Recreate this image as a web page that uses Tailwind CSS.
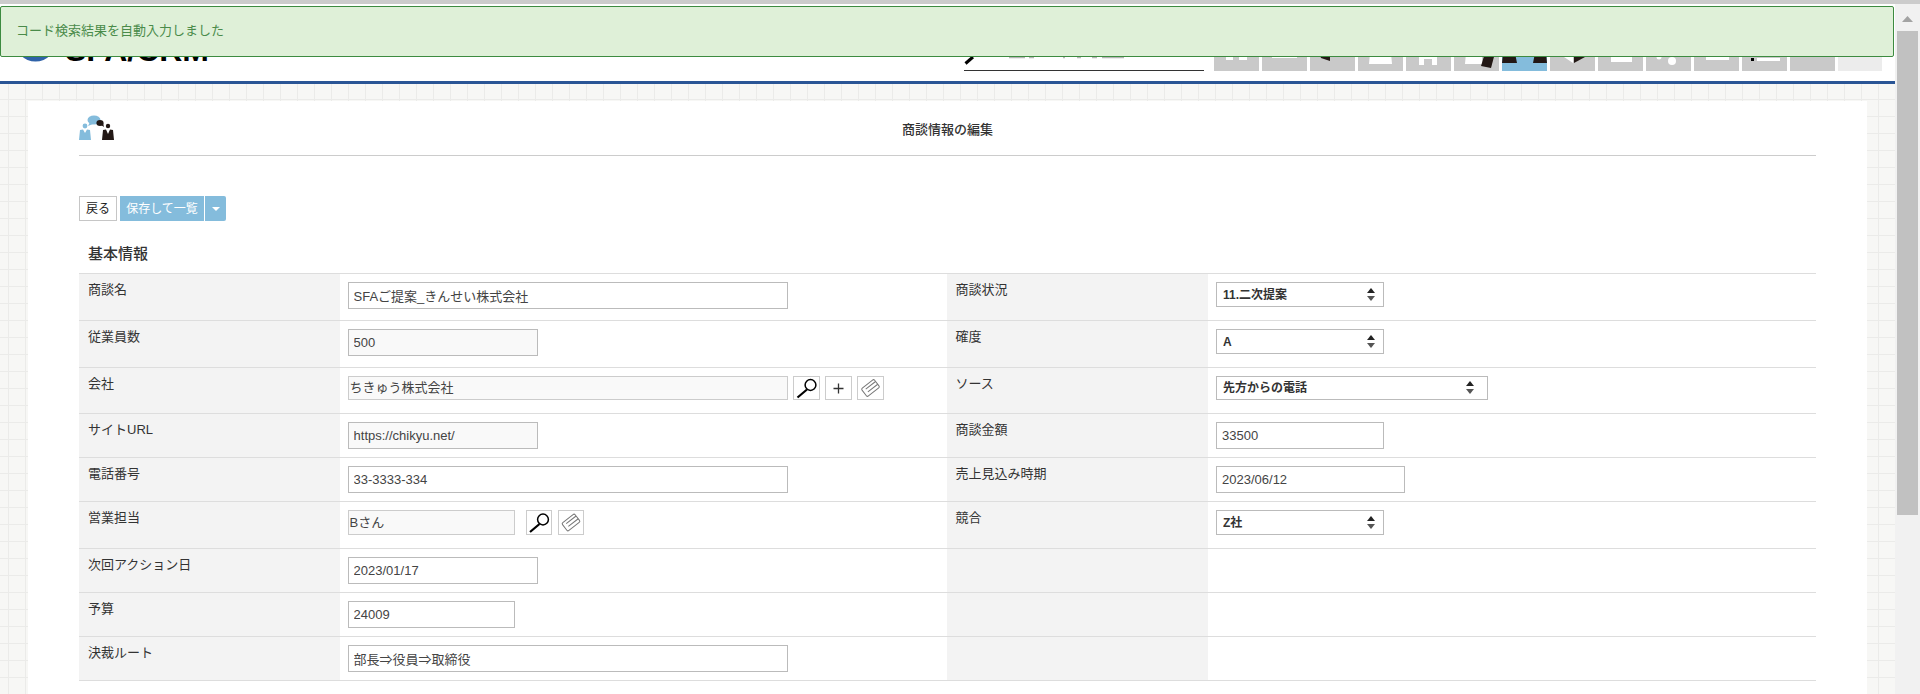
<!DOCTYPE html>
<html lang="ja">
<head>
    <meta charset="UTF-8">
    <meta name="viewport" content="width=device-width, initial-scale=1.0">
    <title>商談情報の編集</title>
    <script src="https://cdn.jsdelivr.net/npm/@tailwindcss/browser@4"></script>
</head>
<body class="h-[694px] overflow-hidden bg-white text-[13px] text-[#333] font-['Liberation_Sans','Noto_Sans_CJK_JP',sans-serif]">
    <div class="h-[4px] bg-[#cccccc]"></div>

    <!-- Notification -->
    <div class="absolute left-0 top-[6px] z-10 flex h-[51px] w-[1894px] items-center rounded-[2px] border border-[#3d8b40] bg-[#dff0d8] pb-[2px] pl-[15px] text-[#4a8b4a]">コード検索結果を自動入力しました</div>

    <div class="flex h-[690px]">
        <div class="flex w-[1895px] flex-col">
            <!-- Header -->
            <header class="flex h-[80px] shrink-0 items-end border-b-[3px] border-[#2a5595] pb-[10px] pr-[13px]">
                <div class="flex items-start self-start">
                    <svg class="ml-[14px] mt-[15px] h-[43px] w-[43px]" viewBox="0 0 43 43"><circle cx="21.5" cy="21.5" r="21" fill="#2f62a8"/></svg>
                    <span class="ml-[8px] mt-[30px] text-[32px] font-bold leading-none text-black">SFA/CRM</span>
                </div>

                <div class="ml-auto h-[46px] w-[240px] border-b-[1.5px] border-[#333]">
                    <svg class="h-[44px] w-[240px]" viewBox="0 0 240 44">
                        <path d="M9 32 L1.5 38.5" stroke="#000" stroke-width="3"/>
                        <path d="M45 32.5 H61 M65 32.5 H70 M99 32.5 H101 M113 32.5 H117 M128 32.5 H133 M138 32.5 H160" stroke="#b5b5b5" stroke-width="1.5"/>
                    </svg>
                </div>

                <!-- Menu tiles, their tops are under the notification -->
                <nav class="ml-[10px] flex gap-[3px]">
                    <svg class="h-[46px] w-[45px] bg-[#c9c9c9]" viewBox="0 0 45 46"><path d="M12 28 H19 V35 H12 Z M25 28 H33 V35 H25 Z" fill="#fff"/></svg>
                    <svg class="h-[46px] w-[45px] bg-[#c9c9c9]" viewBox="0 0 45 46"><path d="M10 28 H35 V33 H10 Z" fill="#fff"/></svg>
                    <svg class="h-[46px] w-[45px] bg-[#c9c9c9]" viewBox="0 0 45 46"><path d="M9 28 H20 V36 L11 33 Z" fill="#231815"/></svg>
                    <svg class="h-[46px] w-[45px] bg-[#c9c9c9]" viewBox="0 0 45 46"><path d="M12 28 H33 L34 39 H11 Z" fill="#fff"/></svg>
                    <svg class="h-[46px] w-[45px] bg-[#c9c9c9]" viewBox="0 0 45 46"><path d="M13 28 H31 V40 H26 V34 H18 V40 H13 Z" fill="#fff"/></svg>
                    <svg class="h-[46px] w-[45px] bg-[#c9c9c9]" viewBox="0 0 45 46"><path d="M12 28 H28 V39 H11 Z" fill="#fff"/><path d="M31 28 H41 L37 43 L27 41 Z" fill="#231815"/></svg>
                    <svg class="h-[46px] w-[45px] bg-[#84bcdc]" viewBox="0 0 45 46"><path d="M1 28 H13 L15 38 H0 Z M33 28 H44 L45 38 H31 Z" fill="#231815"/></svg>
                    <svg class="h-[46px] w-[45px] bg-[#c9c9c9]" viewBox="0 0 45 46"><path d="M11 30 H23 V38 Z" fill="#fff"/><path d="M24 32 H35 L24 38 Z" fill="#231815"/></svg>
                    <svg class="h-[46px] w-[45px] bg-[#c9c9c9]" viewBox="0 0 45 46"><path d="M13 28 H34 V37 H13 Z" fill="#fff"/></svg>
                    <svg class="h-[46px] w-[45px] bg-[#c9c9c9]" viewBox="0 0 45 46"><circle cx="13" cy="32" r="2.5" fill="#fff"/><circle cx="26" cy="36" r="4" fill="#fff"/></svg>
                    <svg class="h-[46px] w-[45px] bg-[#c9c9c9]" viewBox="0 0 45 46"><path d="M12 28 H35 V35 H12 Z" fill="#fff"/></svg>
                    <svg class="h-[46px] w-[45px] bg-[#c9c9c9]" viewBox="0 0 45 46"><path d="M9 33 H12 V36 H9 Z" fill="#000"/><path d="M15 33 H38 V36 H15 Z" fill="#fff"/></svg>
                    <div class="h-[46px] w-[45px] bg-[#c9c9c9]"></div>
                    <div class="h-[46px] w-[44px] bg-[#ececec]"></div>
                </nav>
            </header>

            <!-- Page -->
            <main class="flex-1 bg-[#f7f7f5] bg-[linear-gradient(#ebebe9_1px,transparent_1px),linear-gradient(90deg,#ebebe9_1px,transparent_1px)] bg-size-[17px_17px] bg-position-[8px_15px] px-[28px] pt-[17px]">
                <div class="h-full bg-white px-[51px] pt-[14px]">
                    <div class="flex h-[41px] border-b border-[#cccccc]">
                        <svg class="h-[25px] w-[35px]" viewBox="0 0 35 25">
                            <ellipse cx="15" cy="5" rx="6.5" ry="4.5" fill="#84bcdc"/>
                            <path d="M11 7 L9 11 L14 9 Z" fill="#84bcdc"/>
                            <circle cx="6" cy="11" r="2.4" fill="#84bcdc"/>
                            <path d="M0 25 L1 15 L4 14.5 L6 18 L8 14.5 L11 15 L12 25 Z" fill="#84bcdc"/>
                            <ellipse cx="21" cy="8" rx="3.6" ry="3" fill="#231815"/>
                            <path d="M22 10 L25 12 L24 8 Z" fill="#231815"/>
                            <circle cx="29" cy="11" r="2.2" fill="#231815"/>
                            <path d="M23 25 L24 15 L27 14.5 L29 19 L31 14.5 L34 15 L35 25 Z" fill="#231815"/>
                        </svg>
                        <h1 class="flex-1 pr-[35px] pt-[5px] text-center font-medium leading-[20px]">商談情報の編集</h1>
                    </div>

                    <!-- Buttons -->
                    <div class="mt-[40px] flex h-[25px] text-[12px]">
                        <button class="w-[38px] border border-[#c6c6c6] bg-white text-[#222]">戻る</button>
                        <button class="ml-[3px] w-[84px] bg-[#84bcdc] text-white">保存して一覧</button>
                        <button class="ml-px flex w-[21px] items-center justify-center rounded-r-[2px] bg-[#84bcdc]">
                            <svg class="h-[4px] w-[8px]" viewBox="0 0 8 4"><path d="M0 0 H8 L4 4 Z" fill="#fff"/></svg>
                        </button>
                    </div>

                    <h2 class="mt-[23px] h-[29px] pl-[9px] text-[15px] font-medium leading-[20px]">基本情報</h2>

                    <table class="w-[1737px] table-fixed border-separate border-spacing-0 border-t border-[#dddddd]">
                        <colgroup><col class="w-[15%]"><col class="w-[35%]"><col class="w-[15%]"><col class="w-[35%]"></colgroup>
                        <tbody>
                            <tr class="h-[47px]">
                                <td class="border-b border-[#dddddd] bg-[#f3f3f3] pl-[9px] pt-[6px] align-top leading-[20px]">商談名</td>
                                <td class="border-b border-[#dddddd] pl-2 pt-2 align-top">
                                    <input class="block h-[27px] w-[440px] border border-[#bbbbbb] bg-white px-[5px] text-[#444]" value="SFAご提案_きんせい株式会社">
                                </td>
                                <td class="border-b border-[#dddddd] bg-[#f3f3f3] pl-2 pt-[6px] align-top leading-[20px]">商談状況</td>
                                <td class="border-b border-[#dddddd] pl-2 pt-2 align-top">
                                    <div class="relative h-[25px] w-[168px]">
                                        <select class="h-full w-full appearance-none border border-[#bbbbbb] bg-white pl-[6px] text-[12px] font-bold text-[#333]"><option>11.二次提案</option></select>
                                        <svg class="absolute right-[9px] top-[6px] h-[13px] w-[8px]" viewBox="0 0 8 13"><path d="M4 0 L8 5 H0 Z" fill="#222"/><path d="M4 13 L8 8 H0 Z" fill="#555"/></svg>
                                    </div>
                                </td>
                            </tr>
                            <tr class="h-[47px]">
                                <td class="border-b border-[#dddddd] bg-[#f3f3f3] pl-[9px] pt-[6px] align-top leading-[20px]">従業員数</td>
                                <td class="border-b border-[#dddddd] pl-2 pt-2 align-top">
                                    <input class="block h-[27px] w-[190px] border border-[#bbbbbb] bg-[#f9f9f9] px-[5px] text-[#444]" value="500" readonly>
                                </td>
                                <td class="border-b border-[#dddddd] bg-[#f3f3f3] pl-2 pt-[6px] align-top leading-[20px]">確度</td>
                                <td class="border-b border-[#dddddd] pl-2 pt-2 align-top">
                                    <div class="relative h-[25px] w-[168px]">
                                        <select class="h-full w-full appearance-none border border-[#bbbbbb] bg-white pl-[6px] text-[12px] font-bold text-[#333]"><option>A</option></select>
                                        <svg class="absolute right-[9px] top-[6px] h-[13px] w-[8px]" viewBox="0 0 8 13"><path d="M4 0 L8 5 H0 Z" fill="#222"/><path d="M4 13 L8 8 H0 Z" fill="#555"/></svg>
                                    </div>
                                </td>
                            </tr>
                            <tr class="h-[46px]">
                                <td class="border-b border-[#dddddd] bg-[#f3f3f3] pl-[9px] pt-[6px] align-top leading-[20px]">会社</td>
                                <td class="border-b border-[#dddddd] pl-2 pt-2 align-top">
                                    <div class="flex h-[24px]">
                                        <input class="w-[440px] border border-[#cccccc] bg-[#f9f9f9] px-px text-[#444]" value="ちきゅう株式会社" readonly>
                                        <button class="ml-[5px] w-[27px] border border-[#cccccc] bg-white">
                                            <svg class="h-[22px] w-[25px]" viewBox="0 0 25 22"><circle cx="16.5" cy="8" r="5.4" fill="none" stroke="#000" stroke-width="1.5"/><path d="M13 12.5 L3.5 20.5" stroke="#000" stroke-width="2.2"/></svg>
                                        </button>
                                        <button class="ml-[5px] w-[27px] border border-[#cccccc] bg-white">
                                            <svg class="h-[22px] w-[25px]" viewBox="0 0 25 22"><path d="M12.5 6.5 V16.5 M7.5 11.5 H17.5" stroke="#333" stroke-width="1.3"/></svg>
                                        </button>
                                        <button class="ml-[5px] w-[27px] border border-[#cccccc] bg-white">
                                            <svg class="h-[22px] w-[25px]" viewBox="0 0 25 22"><g transform="rotate(-38 12.5 11)" fill="none" stroke="#777" stroke-width="1"><rect x="4.5" y="6" width="16" height="10" rx="1.5"/><path d="M8 9 H20.5 M8 12.5 H20.5"/></g></svg>
                                        </button>
                                    </div>
                                </td>
                                <td class="border-b border-[#dddddd] bg-[#f3f3f3] pl-2 pt-[6px] align-top leading-[20px]">ソース</td>
                                <td class="border-b border-[#dddddd] pl-2 pt-2 align-top">
                                    <div class="relative h-[24px] w-[272px]">
                                        <select class="h-full w-full appearance-none border border-[#bbbbbb] bg-white pl-[6px] text-[12px] font-bold text-[#333]"><option>先方からの電話</option></select>
                                        <svg class="absolute right-[14px] top-[5px] h-[13px] w-[8px]" viewBox="0 0 8 13"><path d="M4 0 L8 5 H0 Z" fill="#222"/><path d="M4 13 L8 8 H0 Z" fill="#555"/></svg>
                                    </div>
                                </td>
                            </tr>
                            <tr class="h-[44px]">
                                <td class="border-b border-[#dddddd] bg-[#f3f3f3] pl-[9px] pt-[6px] align-top leading-[20px]">サイトURL</td>
                                <td class="border-b border-[#dddddd] pl-2 pt-2 align-top">
                                    <input class="block h-[27px] w-[190px] border border-[#bbbbbb] bg-[#f9f9f9] px-[5px] text-[#444]" value="https://chikyu.net/" readonly>
                                </td>
                                <td class="border-b border-[#dddddd] bg-[#f3f3f3] pl-2 pt-[6px] align-top leading-[20px]">商談金額</td>
                                <td class="border-b border-[#dddddd] pl-2 pt-2 align-top">
                                    <input class="block h-[27px] w-[168px] border border-[#bbbbbb] bg-white px-[5px] text-[#444]" value="33500">
                                </td>
                            </tr>
                            <tr class="h-[44px]">
                                <td class="border-b border-[#dddddd] bg-[#f3f3f3] pl-[9px] pt-[6px] align-top leading-[20px]">電話番号</td>
                                <td class="border-b border-[#dddddd] pl-2 pt-2 align-top">
                                    <input class="block h-[27px] w-[440px] border border-[#bbbbbb] bg-white px-[5px] text-[#444]" value="33-3333-334">
                                </td>
                                <td class="border-b border-[#dddddd] bg-[#f3f3f3] pl-2 pt-[6px] align-top leading-[20px]">売上見込み時期</td>
                                <td class="border-b border-[#dddddd] pl-2 pt-2 align-top">
                                    <input class="block h-[27px] w-[189px] border border-[#bbbbbb] bg-white px-[5px] text-[#444]" value="2023/06/12">
                                </td>
                            </tr>
                            <tr class="h-[47px]">
                                <td class="border-b border-[#dddddd] bg-[#f3f3f3] pl-[9px] pt-[6px] align-top leading-[20px]">営業担当</td>
                                <td class="border-b border-[#dddddd] pl-2 pt-2 align-top">
                                    <div class="flex h-[25px]">
                                        <input class="w-[167px] border border-[#cccccc] bg-[#f9f9f9] px-px text-[#444]" value="Bさん" readonly>
                                        <button class="ml-[11px] w-[26px] border border-[#cccccc] bg-white">
                                            <svg class="h-[23px] w-[24px]" viewBox="0 0 24 23"><circle cx="16" cy="8.5" r="5.4" fill="none" stroke="#000" stroke-width="1.5"/><path d="M12.5 13 L3 21" stroke="#000" stroke-width="2.2"/></svg>
                                        </button>
                                        <button class="ml-[6px] w-[26px] border border-[#cccccc] bg-white">
                                            <svg class="h-[23px] w-[24px]" viewBox="0 0 24 23"><g transform="rotate(-38 12 11.5)" fill="none" stroke="#777" stroke-width="1"><rect x="4" y="6.5" width="16" height="10" rx="1.5"/><path d="M7.5 9.5 H20 M7.5 13 H20"/></g></svg>
                                        </button>
                                    </div>
                                </td>
                                <td class="border-b border-[#dddddd] bg-[#f3f3f3] pl-2 pt-[6px] align-top leading-[20px]">競合</td>
                                <td class="border-b border-[#dddddd] pl-2 pt-2 align-top">
                                    <div class="relative h-[25px] w-[168px]">
                                        <select class="h-full w-full appearance-none border border-[#bbbbbb] bg-white pl-[6px] text-[12px] font-bold text-[#333]"><option>Z社</option></select>
                                        <svg class="absolute right-[9px] top-[6px] h-[13px] w-[8px]" viewBox="0 0 8 13"><path d="M4 0 L8 5 H0 Z" fill="#222"/><path d="M4 13 L8 8 H0 Z" fill="#555"/></svg>
                                    </div>
                                </td>
                            </tr>
                            <tr class="h-[44px]">
                                <td class="border-b border-[#dddddd] bg-[#f3f3f3] pl-[9px] pt-[6px] align-top leading-[20px]">次回アクション日</td>
                                <td class="border-b border-[#dddddd] pl-2 pt-2 align-top">
                                    <input class="block h-[27px] w-[190px] border border-[#bbbbbb] bg-white px-[5px] text-[#444]" value="2023/01/17">
                                </td>
                                <td class="border-b border-[#dddddd] bg-[#f3f3f3]"></td>
                                <td class="border-b border-[#dddddd]"></td>
                            </tr>
                            <tr class="h-[44px]">
                                <td class="border-b border-[#dddddd] bg-[#f3f3f3] pl-[9px] pt-[6px] align-top leading-[20px]">予算</td>
                                <td class="border-b border-[#dddddd] pl-2 pt-2 align-top">
                                    <input class="block h-[27px] w-[167px] border border-[#bbbbbb] bg-white px-[5px] text-[#444]" value="24009">
                                </td>
                                <td class="border-b border-[#dddddd] bg-[#f3f3f3]"></td>
                                <td class="border-b border-[#dddddd]"></td>
                            </tr>
                            <tr class="h-[44px]">
                                <td class="border-b border-[#dddddd] bg-[#f3f3f3] pl-[9px] pt-[6px] align-top leading-[20px]">決裁ルート</td>
                                <td class="border-b border-[#dddddd] pl-2 pt-2 align-top">
                                    <input class="block h-[27px] w-[440px] border border-[#bbbbbb] bg-white px-[5px] text-[#444]" value="部長⇒役員⇒取締役">
                                </td>
                                <td class="border-b border-[#dddddd] bg-[#f3f3f3]"></td>
                                <td class="border-b border-[#dddddd]"></td>
                            </tr>
                        </tbody>
                    </table>
                </div>
            </main>
        </div>

        <!-- Scrollbar -->
        <div class="w-[25px] bg-[#f1f1f1] px-[2px] pt-[12px]">
            <svg class="mx-auto h-[6px] w-[11px]" viewBox="0 0 11 6"><path d="M5.5 0 L11 6 H0 Z" fill="#a3a3a3"/></svg>
            <div class="mt-[9px] h-[484px] bg-[#c1c1c1]"></div>
        </div>
    </div>
</body>
</html>
